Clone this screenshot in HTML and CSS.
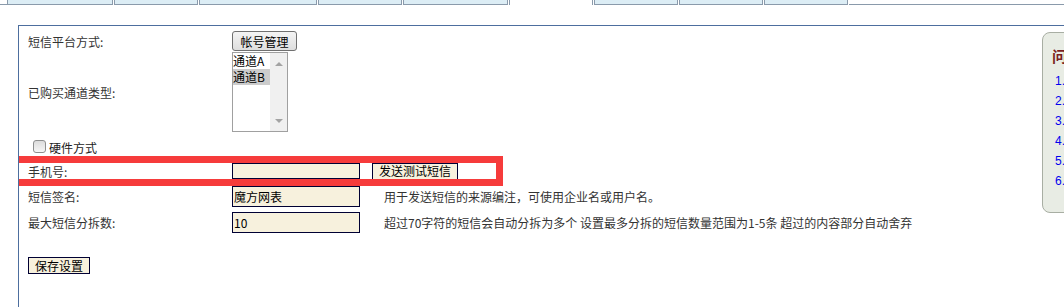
FILE: index.html
```html
<!DOCTYPE html>
<html lang="zh-CN">
<head>
  <meta charset="UTF-8" />
  <title>短信设置</title>
  <link rel="stylesheet" href="styles.css">
</head>
<body>

  <div class="tabs">
    <div class="tab-lead"></div>
    <div class="tab t1"></div>
    <div class="tab t2"></div>
    <div class="tab t3"></div>
    <div class="tab t2"></div>
    <div class="tab t5"></div>
    <div class="tab active"></div>
    <div class="tab t2"></div>
    <div class="tab t2"></div>
    <div class="tab t2"></div>
    <div class="tab-tail"></div>
  </div>

  <div class="panel">
    <form class="settings" autocomplete="off">
      <div class="row row-top">
        <span class="label">短信平台方式:</span>
        <button type="button" class="btn">帐号管理</button>
      </div>

      <div class="row row-list">
        <span class="label">已购买通道类型:</span>
        <div class="listbox">
          <div class="options">
            <div class="opt">通道A</div>
            <div class="opt selected">通道B</div>
          </div>
          <div class="scroll">
            <span class="arrow up"></span>
            <span class="arrow down"></span>
          </div>
        </div>
      </div>

      <div class="row row-check">
        <label class="check"><span class="box"></span><span class="check-text">硬件方式</span></label>
      </div>

      <div class="row row-phone">
        <span class="label">手机号:</span>
        <input type="text" class="field short">
        <button type="button" class="btn-plain send">发送测试短信</button>
        <div class="mark"></div>
      </div>

      <div class="row row-field">
        <span class="label">短信签名:</span>
        <input type="text" class="field" value="魔方网表">
        <span class="hint">用于发送短信的来源编注，可使用企业名或用户名。</span>
      </div>

      <div class="row row-field row-split">
        <span class="label">最大短信分拆数:</span>
        <input type="text" class="field" value="10">
        <span class="hint">超过70字符的短信会自动分拆为多个 设置最多分拆的短信数量范围为1-5条 超过的内容部分自动舍弃</span>
      </div>

      <div class="row row-save">
        <button type="submit" class="btn-plain save">保存设置</button>
      </div>
    </form>

    <aside class="tips">
      <h3>问</h3>
      <ol>
        <li>1.</li>
        <li>2.</li>
        <li>3.</li>
        <li>4.</li>
        <li>5.</li>
        <li>6.</li>
      </ol>
    </aside>
  </div>

</body>
</html>
```

FILE: styles.css
```css
* { box-sizing: border-box; margin: 0; padding: 0; }
html, body {
  width: 100%; height: 100%;
  overflow: hidden;
  background: #fff;
  font-family: "Noto Sans CJK SC", "Liberation Sans", sans-serif;
  font-size: 12px;
  color: #333;
}

/* tab strip (scrolled up, only the bottom edge shows) */
.tabs {
  display: flex;
  height: 5px;
}
.tab-lead, .tab-tail {
  border-bottom: 1px solid #8a9aab;
}
.tab-lead { width: 7px; }
.tab-tail { flex: 1; }
.tab {
  height: 5px;
  margin-right: 1px;
  background: #dcedf5;
  border: 1px solid #8a9aab;
  border-top: none;
}
.t1 { width: 106px; }
.t2 { width: 84px; }
.t3 { width: 118px; }
.t5 { width: 105px; }
.tab.active {
  width: 84px;
  background: #fff;
  border-bottom: none;
}

.panel {
  display: flex;
  height: 282px;
  margin: 20px 0 0 18px;
  border-top: 1px solid #4d6e9e;
  border-left: 1px solid #4d6e9e;
  overflow: hidden;
}
.settings {
  flex: 1;
  padding: 5px 0 0 9px;
}
.row {
  position: relative;
  display: flex;
  align-items: center;
}
.label {
  width: 204px;
  flex-shrink: 0;
}
.row-top { height: 20px; }
.row-list { height: 80px; margin-top: 1px; }
.row-check { height: 16px; margin-top: 6px; }
.row-phone { height: 16px; margin-top: 9px; }
.row-field { height: 21px; margin-top: 7px; }
.row-split { margin-top: 5px; }
.row-save { height: 17px; margin-top: 24px; }

.btn {
  width: 65px;
  height: 20px;
  font: inherit;
  color: #000;
  background: linear-gradient(#f4f4f4, #dedede);
  border: 1px solid #707070;
  border-radius: 3px;
}
.btn-plain {
  height: 17px;
  font: inherit;
  line-height: 14px;
  color: #000;
  background: #f7f1dd;
  border: 1px solid #000033;
}
.send { width: 86px; margin-left: 12px; }
.save { width: 62px; }

.listbox {
  display: flex;
  width: 56px;
  height: 80px;
  border: 1px solid #a0a0a0;
  background: #fff;
}
.options { flex: 1; }
.opt {
  height: 16px;
  line-height: 16px;
  color: #000;
}
.opt.selected { background: #cccccc; }
.scroll {
  width: 17px;
  background: #f0f0f0;
  display: flex;
  flex-direction: column;
  justify-content: space-between;
  align-items: center;
  padding: 9px 0 8px;
}
.arrow {
  width: 0; height: 0;
  border-left: 4px solid transparent;
  border-right: 4px solid transparent;
}
.arrow.up { border-bottom: 4px solid #a3a3a3; }
.arrow.down { border-top: 4px solid #a3a3a3; }

.check {
  display: flex;
  align-items: center;
  padding-left: 5px;
  color: #222;
}
.check .box {
  width: 13px;
  height: 13px;
  margin-right: 3px;
  border: 1px solid #8e8f8f;
  border-radius: 3px;
  background: linear-gradient(#dcdcdc, #f6f6f6);
}
.check-text { padding-top: 3px; }

.field {
  width: 128px;
  height: 21px;
  padding: 0 1px;
  font: inherit;
  color: #000;
  background: #f7f1dd;
  border: 1px solid #000033;
  outline: none;
}
.field.short { height: 16px; }
.hint { margin-left: 24px; white-space: nowrap; }

/* red annotation frame over the phone row */
.mark {
  position: absolute;
  left: -17px;
  top: -7px;
  width: 492px;
  height: 30px;
  border: 7px solid #f63b3b;
  pointer-events: none;
}

.tips {
  flex-shrink: 0;
  width: 200px;
  height: 181px;
  margin: 6px -178px 0 0;
  padding: 14px 0 0 9px;
  background: #e8ece4;
  border: 1px solid #a8aea3;
  border-radius: 8px;
}
.tips h3 {
  font-size: 15px;
  font-weight: bold;
  color: #7b1f1f;
  line-height: 18px;
}
.tips ol {
  list-style: none;
  margin-top: 6px;
  padding-left: 3px;
}
.tips li {
  height: 20px;
  line-height: 20px;
  font-family: "Liberation Sans", sans-serif;
  font-size: 12px;
  color: #0000ee;
}
```
